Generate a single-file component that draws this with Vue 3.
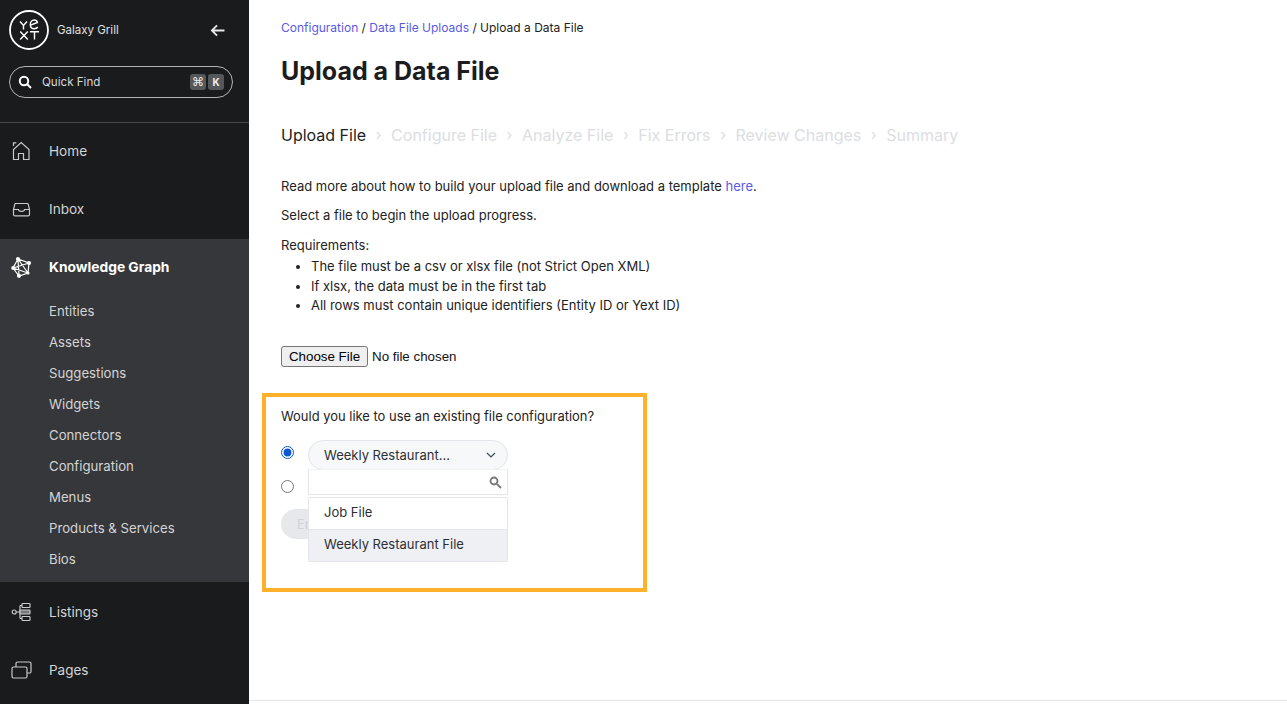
<script setup>
const subItems = ['Entities','Assets','Suggestions','Widgets','Connectors','Configuration','Menus','Products & Services','Bios']
const steps = ['Configure File','Analyze File','Fix Errors','Review Changes','Summary']
const reqs = ['The file must be a csv or xlsx file (not Strict Open XML)','If xlsx, the data must be in the first tab','All rows must contain unique identifiers (Entity ID or Yext ID)']
</script>

<template>
  <div class="page">
    <aside class="side">
      <div class="head">
        <div class="brand">
          <svg class="logo" width="40" height="40" viewBox="0 0 40 40" fill="none" stroke="#fff">
            <circle cx="20" cy="20" r="19" stroke-width="1.800"/>
            <g stroke-width="1.400">
              <path d="M11 11.500 14.500 15.500 18 11.500M14.500 15.500V19.500"/>
              <path d="M21.500 15.200 28.500 12.500C28 10.500 26.800 10 25.300 10 23 10 21.300 12 21.300 14.500 21.300 17 23 18.800 25.300 18.800 26.800 18.800 28 18.200 28.800 17"/>
              <path d="M11.200 21.500 18.800 29.500M18.800 21.500 11.200 29.500"/>
              <path d="M21 21.800H30M25.500 21.800V29.500"/>
            </g>
          </svg>
          <span class="org">Galaxy Grill</span>
          <svg class="back" width="15" height="13" viewBox="0 0 16 14" fill="none" stroke="#e8e8e8" stroke-width="2"><path d="M15.500 7H2M7.500 1.500 2 7l5.500 5.500"/></svg>
        </div>
        <div class="find">
          <svg width="14" height="14" viewBox="0 0 14 14" fill="none" stroke="#fff" stroke-width="2"><circle cx="6" cy="6" r="4.200"/><path d="m9 9 4 4"/></svg>
          <span class="find-label">Quick Find</span>
          <span class="key cmd">⌘</span><span class="key k2">K</span>
        </div>
      </div>
      <nav>
        <div class="row">
          <svg class="ic" width="22" height="22" viewBox="0 0 22 22" fill="none" stroke="#c9c9c9" stroke-width="1.200"><path d="M2.500 9.500V19.500H7.500V13.500H12.500V19.500H18V9.500L10.200 2.500 2.500 9.500ZM2.500 6V2.800H5.300"/></svg>
          <span>Home</span>
        </div>
        <div class="row">
          <svg class="ic" width="22" height="22" viewBox="0 0 22 22" fill="none" stroke="#c9c9c9" stroke-width="1.200"><path d="M4.800 5.500H16.200A1 1 0 0 1 17.200 6.200L18.500 11.500V16.500A1.300 1.300 0 0 1 17.200 17.800H3.800A1.300 1.300 0 0 1 2.500 16.500V11.500L3.800 6.200A1 1 0 0 1 4.800 5.500ZM2.500 11.500H7.500C7.500 14 13.500 14 13.500 11.500H18.500"/></svg>
          <span>Inbox</span>
        </div>
        <div class="group">
          <div class="row active">
            <svg class="ic" width="22" height="22" viewBox="0 0 22 22" fill="none" stroke="#fff" stroke-width="1.200"><path d="M7 3 18 7 17 17 8 20 2 12ZM7 3 8 20M2 12 18 7M2 12 17 17M7 3 17 17"/><g fill="#fff" stroke="none"><circle cx="7" cy="3" r="2.100"/><circle cx="18" cy="7" r="2.100"/><circle cx="2.300" cy="12" r="2.100"/><circle cx="8" cy="19.800" r="2.100"/><circle cx="17" cy="17" r="1.600"/></g></svg>
            <span>Knowledge Graph</span>
          </div>
          <ul class="subs">
            <li v-for="s in subItems" :key="s">{{ s }}</li>
          </ul>
        </div>
        <div class="row low">
          <svg class="ic" width="22" height="22" viewBox="0 0 22 22" fill="none" stroke="#c9c9c9" stroke-width="1.200"><circle cx="3.200" cy="11" r="2"/><path d="M5.200 11H9M9 4.500V17.500M9 4.500H11M9 17.500H11"/><rect x="11" y="2.500" width="8" height="4" rx=".8"/><rect x="9" y="9" width="10" height="4" rx=".8" fill="#777"/><rect x="11" y="15.500" width="8" height="4" rx=".8"/></svg>
          <span>Listings</span>
        </div>
        <div class="row low">
          <svg class="ic" width="22" height="22" viewBox="0 0 22 22" fill="none" stroke="#c9c9c9" stroke-width="1.200"><rect x="1" y="8" width="15" height="11" rx="1.500"/><path d="M5 8V4.500A1.500 1.500 0 0 1 6.500 3H18.500A1.500 1.500 0 0 1 20 4.500V12.500A1.500 1.500 0 0 1 18.500 14H16"/></svg>
          <span>Pages</span>
        </div>
      </nav>
    </aside>

    <main class="main">
      <div class="crumbs"><a>Configuration</a> / <a>Data File Uploads</a> / Upload a Data File</div>
      <h1>Upload a Data File</h1>
      <div class="steps">
        <span class="step on">Upload File</span>
        <template v-for="s in steps" :key="s">
          <span class="sep">›</span><span class="step">{{ s }}</span>
        </template>
      </div>
      <p class="p1">Read more about how to build your upload file and download a template <a>here</a>.</p>
      <p class="p2">Select a file to begin the upload progress.</p>
      <div class="req">Requirements:</div>
      <ul class="reqs"><li v-for="r in reqs" :key="r">{{ r }}</li></ul>
      <div class="file"><button class="choose">Choose File</button><span>No file chosen</span></div>

      <section class="box">
        <div class="q">Would you like to use an existing file configuration?</div>
        <div class="opts">
          <div class="radios">
            <input type="radio" name="c" checked>
            <input type="radio" name="c">
          </div>
          <div class="select">
            <span>Weekly Restaurant...</span>
            <svg width="10" height="6" viewBox="0 0 10 6" fill="none" stroke="#3a4a5c" stroke-width="1.200"><path d="m1 1 4 4 4-4"/></svg>
          </div>
        </div>
        <button class="next">Enter</button>
        <div class="drop">
          <div class="search">
            <svg width="13" height="13" viewBox="0 0 13 13" fill="none" stroke="#777" stroke-width="1.800"><circle cx="5" cy="5" r="3.500"/><path d="m7.800 7.800 4.200 4.200"/></svg>
          </div>
          <div class="list">
            <div class="opt">Job File</div>
            <div class="opt sel">Weekly Restaurant File</div>
          </div>
        </div>
      </section>
    </main>
  </div>
</template>

<style>
html, body { margin: 0; overflow: hidden; }
</style>

<style scoped>
.page { display: flex; width: 1287px; height: 704px; overflow: hidden; font-family: Inter, "Liberation Sans", sans-serif; background: #fff; color: #222; }
.side { width: 249px; flex: none; background: #1a1b1d; color: #d4d4d4; font-size: 13.6px; }
.head { height: 112px; border-bottom: 1px solid #4a4a4c; padding: 10px 16px 0 9px; width: 224px; }
.brand { display: flex; align-items: center; height: 40px; }
.logo { flex: none; }
.org { margin: 0 0 1px 8px; font-size: 11.500px; color: #e0e0e0; }
.back { margin-left: auto; margin-right: 8px; }
.find { margin-top: 16px; height: 30px; border: 1px solid #b5b5b5; border-radius: 16px; display: flex; align-items: center; padding: 0 8px; font-size: 11.600px; color: #d8d8d8; }
.find-label { margin-left: 10px; flex: 1; }
.key { width: 16px; height: 16px; background: #55585b; border-radius: 3px; font-size: 10px; line-height: 16px; text-align: center; color: #eee; font-weight: 700; }
.cmd { font-size: 12px; font-weight: 400; font-family: "DejaVu Sans", sans-serif; }
.k2 { margin-left: 2px; }
.row { height: 58px; box-sizing: border-box; padding: 0 0 2px 11px; display: flex; align-items: center; }
.low { padding: 2px 0 0 11px; font-size: 13.500px; }
.ic { margin-right: 16px; flex: none; }
.group { background: #36373b; height: 343px; }
.active { font-weight: 700; color: #fff; font-size: 13.800px; }
.subs { list-style: none; margin: -1px 0 0; padding: 0 0 0 49px; font-size: 13.200px; }
.subs li { height: 31px; line-height: 31px; color: #d4d4d4; }
.main { flex: 1; padding: 0 0 0 32px; border-bottom: 1px solid #e4e6ea; height: 700px; font-size: 13px; position: relative; }
.crumbs { font-size: 12px; margin-top: 20px; line-height: 16px; }
a { color: #5a5ae6; }
h1 { font-size: 25px; font-weight: 700; line-height: 30px; margin: 20px 0 0; color: #1c1c1e; }
.steps { display: flex; align-items: center; margin-top: 39px; font-size: 16px; line-height: 20px; color: #dcdee2; }
.step.on { color: #222; }
.sep { margin: 0 9.600px; font-size: 15px; }
.p1 { margin: 33px 0 0; line-height: 16px; }
.p2 { margin: 13px 0 0; line-height: 16px; }
.req { margin-top: 14px; line-height: 16px; }
.reqs { margin: 4px 0 0; padding-left: 30px; }
.reqs li { line-height: 19.500px; }
.file { margin-top: 30px; display: flex; align-items: center; height: 21px; font-family: "Liberation Sans", sans-serif; font-size: 13.333px; color: #111; }
.choose { font: inherit; width: 87px; height: 21px; padding: 0; margin-right: 4px; border: 1px solid #767676; border-radius: 3px; background: #efefef; color: #000; }
.box { position: relative; width: 385px; height: 199px; box-sizing: border-box; border: 4px solid #ffb12b; margin: 26px 0 0 -19px; padding: 11px 15px; }
.q { line-height: 16px; font-size: 12.950px; }
.opts { display: flex; margin-top: 16px; }
.radios { display: flex; flex-direction: column; width: 27px; }
.radios input { width: 13px; height: 13px; margin: 6px 0 0; accent-color: #0b57d0; }
.radios input + input { margin-top: 21px; }
.select { width: 200px; height: 30px; box-sizing: border-box; border: 1px solid #e3e5ea; border-radius: 15px; background: #f7f8fa; display: flex; align-items: center; justify-content: space-between; padding: 0 11px 0 15px; color: #2b2f36; }
.next { display: block; margin-top: 16px; width: 80px; height: 30px; border: 0; border-radius: 15px; background: #e6e8ec; color: #cfd2d8; font: inherit; padding: 0 0 0 16px; text-align: left; }
.drop { position: absolute; left: 42px; top: 73px; width: 200px; color: #2b2f36; }
.search { height: 25px; box-sizing: border-box; background: #fff; border: 1px solid #e3e5ea; border-top: 0; box-shadow: 0 -1px 0 #f1f2f4; display: flex; justify-content: flex-end; align-items: flex-start; padding: 6px 5px 0; }
.list { margin-top: 2px; border: 1px solid #e3e5ea; border-radius: 2px; background: #fff; }
.opt { height: 31px; line-height: 29px; padding-left: 15px; }
.sel { background: #eff0f4; border-top: 1px solid #e3e5ea; }
</style>
